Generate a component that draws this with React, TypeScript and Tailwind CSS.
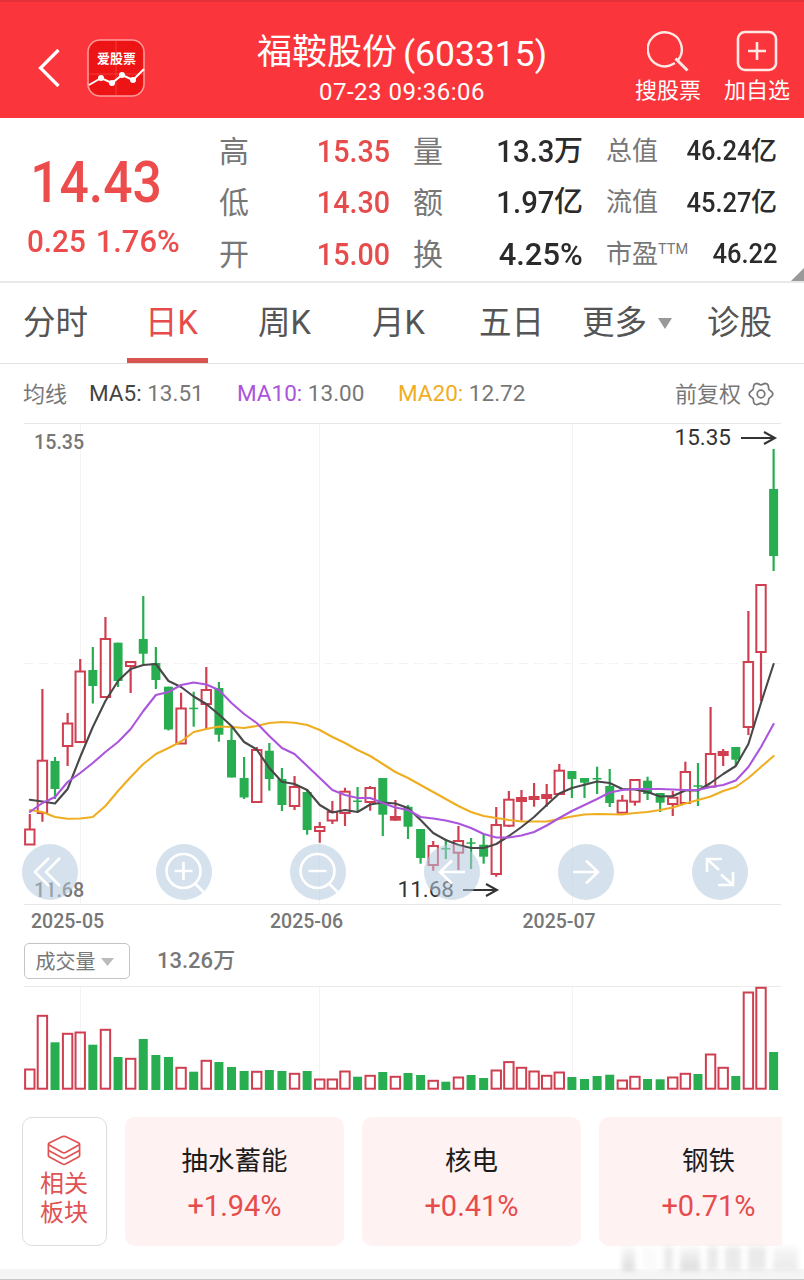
import type { ReactNode } from 'react'

interface Candle {
  up: boolean
  high: number
  top: number
  bottom: number
  low: number
  volume: number
  solid?: boolean
}

const RED = '#cf3f50'
const GREEN = '#28ad50'
const STEP = 12.607
const FIRST_X = 29.8
const CHART_TOP = 422
const VOLUME_TOP = 984
const VOLUME_BASE = 1089.5

// up(1)/down(0)/up with a filled body(2), high, body top, body bottom, low, volume bar top
const raw: number[][] = [
  [1, 814, 829.5, 844.5, 844.5, 1068.7],
  [1, 689, 760.7, 813, 821.7, 1015],
  [0, 757, 761, 789, 799, 1042.3],
  [1, 713, 723.5, 746, 766, 1033],
  [1, 659, 671.5, 742, 742, 1031.7],
  [0, 647, 670, 686, 703.5, 1044.7],
  [1, 617, 639, 697, 697, 1029],
  [0, 642.7, 642.7, 681, 687, 1057],
  [1, 661.7, 662, 666, 693, 1058],
  [0, 596, 639, 653.7, 664, 1039],
  [0, 647, 663, 680, 689, 1055],
  [0, 686.7, 686.7, 729.5, 730.5, 1057],
  [1, 692.7, 708.5, 743.5, 743.5, 1067],
  [0, 691.7, 707.7, 709.2, 726.7, 1071.7],
  [1, 667, 690, 704, 729, 1060],
  [0, 682, 688, 734.7, 741.7, 1062],
  [0, 728, 740, 777.5, 777.5, 1067],
  [0, 757, 778, 797.5, 799, 1071],
  [1, 747, 750, 802, 802, 1071],
  [0, 743, 750.7, 779, 790.7, 1070],
  [0, 768, 779, 805, 811, 1071],
  [1, 776, 787, 806, 810, 1073],
  [0, 789, 792, 830, 834.7, 1071],
  [1, 822, 827, 831, 842.7, 1078.7],
  [1, 801, 812, 820.5, 824, 1078.7],
  [1, 787.7, 791.7, 813, 826, 1070.7],
  [0, 787, 800.5, 802, 811.7, 1076.7],
  [1, 786, 788, 802, 810.7, 1075],
  [0, 778, 778, 814.7, 836, 1072],
  [2, 800, 816, 820.7, 820.7, 1076],
  [0, 805, 806.7, 826.7, 839, 1073],
  [0, 829, 829, 858, 863.7, 1075],
  [1, 841, 846, 865, 870.7, 1080],
  [0, 839, 848, 849.5, 859, 1081.7],
  [1, 826, 841, 852.7, 870, 1076.7],
  [0, 838, 842.3, 843.8, 869, 1075],
  [0, 834, 844.7, 856.7, 863.7, 1078],
  [1, 807, 825, 874, 876.7, 1069.7],
  [1, 791, 799.7, 825.7, 827, 1061.3],
  [2, 790, 797, 802, 820.7, 1067],
  [2, 783, 796, 800, 806.7, 1070.7],
  [2, 784, 794, 799, 806.7, 1075],
  [1, 764, 770.7, 794, 794, 1071.7],
  [0, 771, 771, 779, 798, 1077],
  [0, 778, 778, 782.7, 798, 1079],
  [0, 766.7, 778, 779.5, 794, 1076],
  [0, 769, 786, 803, 807, 1074.7],
  [1, 795, 800.7, 812.7, 812.7, 1079.7],
  [1, 780, 780, 801.7, 805.7, 1076],
  [0, 776.7, 780.7, 794, 800, 1079],
  [0, 793, 793, 802.7, 812, 1079.3],
  [1, 791, 797.7, 804, 816, 1076.7],
  [1, 761.7, 772, 803, 803, 1073],
  [0, 763, 785.3, 786.8, 806, 1074],
  [1, 707, 754, 786.7, 786.7, 1053.7],
  [2, 749, 751, 756, 766, 1067],
  [0, 747, 747, 759.7, 765, 1076],
  [1, 611, 662, 727, 735, 991.7],
  [1, 585, 585, 652, 701, 987],
  [0, 449, 489, 556, 571, 1052],
]

const candles: Candle[] = raw.map(([kind, high, top, bottom, low, volume]) => ({
  up: kind > 0,
  solid: kind === 2,
  high,
  top,
  bottom,
  low,
  volume,
}))

const ma5 = [
  799.7, 801.5, 803.5, 789, 757, 727, 701, 681, 669, 665, 664, 681, 687, 696.5, 704, 714.5, 726, 742, 749.5, 768,
  781.7, 784, 790, 805, 812.5, 810, 812, 804.5, 802.5, 803.5, 808, 820, 833, 840, 845, 848, 848, 844, 836, 827,
  817, 805, 793.5, 788, 784.7, 781.5, 783, 789, 789.5, 792, 796.5, 796, 790.5, 790.5, 783, 774, 766, 744, 703, 664,
]
const ma10 = [
  812, 803, 797, 782, 773, 763, 752, 742, 729, 711, 695, 692, 685, 682.5, 684.5, 690, 703, 714, 723, 736,
  748, 754, 766, 778, 790, 795, 798, 798, 803, 807.5, 810, 817, 818.5, 820.5, 823.5, 828, 834, 837.5, 837.5, 835.5,
  832, 825.5, 818, 811, 805, 799, 792.5, 790, 789, 789, 789, 789.5, 790, 790, 787, 785, 780.5, 767, 747, 724,
]
const ma20 = [
  810, 812, 817, 818.7, 818.5, 817, 806, 791, 777, 764, 754, 748, 741.5, 732, 729, 726.5, 727, 728, 726, 723,
  722, 722.7, 725, 730, 737, 743, 750, 756, 764, 772, 778, 785, 792, 799, 806, 812, 816, 818, 820, 821.5,
  821.5, 821.5, 819, 816.5, 814.5, 814, 814.2, 814.5, 813, 812, 810, 807.5, 803.5, 800, 796.5, 791, 787, 778, 767, 756,
]

const xAt = (i: number) => FIRST_X + i * STEP
const toPoints = (values: number[]) => values.map((y, i) => `${xAt(i).toFixed(1)},${y}`).join(' ')

const stats = [
  { label: '高', value: '15.35', label2: '量', value2: '13.3', unit2: '万', label3: '总值', value3: '46.24', unit3: '亿' },
  { label: '低', value: '14.30', label2: '额', value2: '1.97', unit2: '亿', label3: '流值', value3: '45.27', unit3: '亿' },
  { label: '开', value: '15.00', label2: '换', value2: '4.25%', unit2: '', label3: '市盈', value3: '46.22', unit3: '' },
]

const sectors = [
  { name: '抽水蓄能', change: '+1.94%' },
  { name: '核电', change: '+0.41%' },
  { name: '钢铁', change: '+0.71%' },
]

function Header() {
  return (
    <header className="flex h-[118px] border-t-2 border-[#e23238] bg-[#fa363c] text-white">
      <div className="flex w-[200px] items-start pt-[37px] pl-[38px]">
        <svg className="mt-[9px] h-10 w-[22px]" viewBox="0 0 22 40" fill="none" stroke="#fff" strokeWidth="3.2">
          <path d="M20.5 2 2.5 20l18 18" />
        </svg>
        <svg className="ml-[27px] h-[58px] w-[58px]" viewBox="0 0 58 58">
          <rect x="1" y="1" width="56" height="56" rx="12" fill="#ec1414" stroke="#ff9a9a" strokeWidth="1.6" />
          <path d="M29 2v54M2 35h54" stroke="#f43c3c" strokeWidth="1" />
          <text
            x="29.5"
            y="24"
            textAnchor="middle"
            fontSize="13"
            fontWeight="700"
            fill="#fff"
            fontFamily="'Noto Sans CJK SC', sans-serif"
          >
            爱股票
          </text>
          <path d="m2 46 12-7 11 5 10-8 11 5 11-11" fill="none" stroke="#fff" strokeWidth="2" />
          <circle cx="14" cy="39" r="3" fill="#fff" />
          <circle cx="25" cy="44" r="3" fill="#fff" />
          <circle cx="35" cy="36" r="3" fill="#fff" />
          <circle cx="46" cy="41" r="3" fill="#fff" />
        </svg>
      </div>
      <div className="flex flex-1 flex-col items-center pt-[30px]">
        <div className="flex items-center gap-[6px] leading-10 whitespace-nowrap">
          <span className="text-[35px]">福鞍股份</span>
          <span className="pt-[2px] text-[35.5px]">(603315)</span>
        </div>
        <div className="mt-[4px] text-[24px] leading-7 tracking-[0.5px]">07-23 09:36:06</div>
      </div>
      <div className="flex w-[200px] pt-[28px] pl-[30px] text-[22px]">
        <div className="flex w-[68px] flex-col items-center">
          <svg className="h-[42px] w-[42px]" viewBox="0 0 42 42" fill="none" stroke="#ffe9e4" strokeWidth="2.4">
            <path d="M27 33.6A17 17 0 1 1 31 30" strokeLinecap="round" />
            <path d="m28.5 28.5 12 12" strokeWidth="3" />
          </svg>
          <span className="mt-[5px] leading-7 whitespace-nowrap">搜股票</span>
        </div>
        <div className="ml-[21px] flex w-[68px] flex-col items-center">
          <svg className="h-[42px] w-[42px]" viewBox="0 0 42 42" fill="none" stroke="#ffe9e4" strokeWidth="2.6">
            <rect x="2" y="2" width="38" height="38" rx="7" />
            <path d="M21 12v18M12 21h18" />
          </svg>
          <span className="mt-[5px] leading-7 whitespace-nowrap">加自选</span>
        </div>
      </div>
    </header>
  )
}

function Quote() {
  return (
    <section className="relative flex h-[165px] border-b-2 border-[#e9e9e9]">
      <div className="flex w-[207px] flex-col items-center pt-[34px] font-medium text-[#ec4c4c]">
        <div className="mr-4 origin-center scale-x-[0.89] text-[58px] leading-[60px]">14.43</div>
        <div className="mt-[12px] flex w-[153px] justify-between text-[31.5px] leading-9">
          <span className="origin-left scale-x-[0.94]">0.25</span>
          <span className="origin-right scale-x-[0.98]">1.76%</span>
        </div>
      </div>
      <div className="pt-[7.5px]">
        {stats.map((row) => (
          <div key={row.label} className="flex h-[51.5px] items-center whitespace-nowrap text-[#777]">
            <span className="ml-3 w-[31px] text-[30px]">{row.label}</span>
            <span className="w-[140px] origin-right scale-x-[0.91] text-right text-[31.5px] font-medium text-[#e64c4c]">
              {row.value}
            </span>
            <span className="ml-[23px] w-[31px] text-[30px]">{row.label2}</span>
            <span className="flex w-[139px] items-center justify-end font-medium text-[#2b2b2b]">
              {row.unit2 ? (
                <>
                  <span className="origin-right scale-x-[0.93] text-[31.5px]">{row.value2}</span>
                  <span className="text-[29px]">{row.unit2}</span>
                </>
              ) : (
                <span className="origin-right scale-x-[0.98] text-[31.5px]">{row.value2}</span>
              )}
            </span>
            <span className="ml-[23px] w-[82px] text-[26px]">
              {row.label3}
              {row.label === '开' && <span className="relative -top-[9px] text-[14.5px]">TTM</span>}
            </span>
            <span className="flex w-[89px] items-center justify-end font-medium text-[#2b2b2b]">
              <span className="origin-right scale-x-[0.91] text-[28px]">{row.value3}</span>
              {row.unit3 && <span className="text-[26px]">{row.unit3}</span>}
            </span>
          </div>
        ))}
      </div>
      <svg className="absolute right-0 bottom-0 h-[13px] w-[13px]" viewBox="0 0 13 13">
        <path d="M13 0v13H0z" fill="#999" />
      </svg>
    </section>
  )
}

function Tabs() {
  return (
    <nav className="flex h-[81px] items-center border-b border-[#e2e2e2] pl-[23px] text-[32.5px] leading-[48px] whitespace-nowrap text-[#555]">
      <span className="w-[104px]">分时</span>
      <span className="relative flex h-[80px] w-[81px] items-center justify-center pl-2 text-[#e64c4c]">
        日K
        <span className="absolute bottom-0 left-0 h-[5px] w-[81px] bg-[#d9534f]" />
      </span>
      <span className="ml-[50px] w-[114px]">周K</span>
      <span className="w-[107px]">月K</span>
      <span className="w-[103px]">五日</span>
      <span className="flex w-[125px] items-center">
        更多
        <svg className="ml-[11px] h-[11px] w-[14px]" viewBox="0 0 14 11">
          <path d="M0 0h14L7 11z" fill="#999" />
        </svg>
      </span>
      <span>诊股</span>
    </nav>
  )
}

function gearPath() {
  const points: string[] = []
  for (let deg = 0; deg < 360; deg += 6) {
    const a = (deg * Math.PI) / 180
    const r = 10.5 + 1.3 * Math.cos(6 * a)
    points.push(`${(13 + r * Math.cos(a)).toFixed(2)} ${(13 + r * Math.sin(a)).toFixed(2)}`)
  }
  return `M${points.join('L')}Z`
}

function Averages() {
  return (
    <div className="flex h-[58px] items-center pt-[2px] pl-[23px] text-[22.5px] whitespace-nowrap text-[#777]">
      <span className="w-[66px] text-[22px]">均线</span>
      <span className="w-[148px]">
        <span className="text-[#444]">MA5:</span> 13.51
      </span>
      <span className="w-[161px]">
        <span className="text-[#ab55dc]">MA10:</span> 13.00
      </span>
      <span className="w-[277px]">
        <span className="text-[#efae22]">MA20:</span> 12.72
      </span>
      <span className="text-[22px]">前复权</span>
      <svg className="ml-[7px] h-[26px] w-[26px]" viewBox="0 0 26 26" fill="none" stroke="#777" strokeWidth="1.7">
        <path d={gearPath()} strokeLinejoin="round" />
        <circle cx="13" cy="13" r="3.8" />
      </svg>
    </div>
  )
}

function ControlButton({ children }: { children: ReactNode }) {
  return (
    <button className="h-14 w-14 rounded-full bg-[rgb(179,200,220)]/55">
      <svg className="h-14 w-14" viewBox="0 0 56 56" fill="none" stroke="#fff" strokeWidth="2.6">
        {children}
      </svg>
    </button>
  )
}

function PriceChart() {
  return (
    <div className="relative h-[484px]">
      <svg className="block h-[484px] w-[804px]" viewBox={`0 ${CHART_TOP} 804 484`}>
        <g stroke="#f3f3f3" strokeWidth="1">
          <path d="M80.5 423v482M319.5 423v482M572.5 423v482" />
          <path d="M24 663.5h757" strokeDasharray="9 6" />
          <path d="M24 423.5h757M24 904.5h757" stroke="#e6e6e6" />
        </g>
        <g fontFamily="Roboto, sans-serif">
          <text x="34" y="449" fontSize="19.7" fontWeight="500" fill="#777">15.35</text>
          <text x="34" y="897" fontSize="19.7" fontWeight="500" fill="#777">11.68</text>
          <text x="674.5" y="445" fontSize="22.5" fill="#333">15.35</text>
          <text x="397.5" y="897" fontSize="22.5" fill="#333">11.68</text>
        </g>
        {candles.map((c, i) => {
          const x = xAt(i)
          if (!c.up || c.solid) {
            const color = c.up ? RED : GREEN
            return (
              <g key={i} fill={color}>
                <rect x={x - 1.1} y={c.high} width="2.2" height={c.low - c.high} />
                <rect x={c.up ? x - 5.5 : x - 4.5} y={c.top} width={c.up ? 11 : 9} height={c.bottom - c.top} />
              </g>
            )
          }
          return (
            <g key={i} stroke={RED} strokeWidth="2.2" fill="none">
              <path d={`M${x} ${c.high}V${c.top}M${x} ${c.bottom}V${c.low}`} />
              <rect x={x - 4.7} y={c.top} width="9.4" height={c.bottom - c.top} strokeWidth="2" />
            </g>
          )
        })}
        <g fill="none" strokeWidth="2.1" strokeLinejoin="round" strokeLinecap="round">
          <polyline points={toPoints(ma20)} stroke="#efae22" />
          <polyline points={toPoints(ma5)} stroke="#484848" />
          <polyline points={toPoints(ma10)} stroke="#ab55dc" />
        </g>
        <g fill="none" stroke="#333" strokeWidth="2">
          <path d="M741 438h34M764 432l11 6-11 6" />
          <path d="M463 890h34M486 884l11 6-11 6" />
        </g>
      </svg>
      <div className="absolute bottom-[6.5px] left-[22px] flex gap-[78px]">
        <ControlButton>
          <path d="M27 14 13 28l14 14M38 14 24 28l14 14" />
        </ControlButton>
        <ControlButton>
          <circle cx="27.5" cy="27" r="17" />
          <path d="M18.5 27h18M27.5 18v18M39 39.5l8.5 8.5" />
        </ControlButton>
        <ControlButton>
          <circle cx="27.5" cy="27" r="17" />
          <path d="M18.5 27h18M39 39.5l8.5 8.5" />
        </ControlButton>
        <ControlButton>
          <path d="M41 28H15.5M28 16.5 16 28l12 11.5" />
        </ControlButton>
        <ControlButton>
          <path d="M15 28h25.5M28 16.5 40 28 28 39.5" />
        </ControlButton>
        <ControlButton>
          <path d="M15 28V15h15M15 15l12 11M41 28v13H26M41 41 29 30.5" />
        </ControlButton>
      </div>
    </div>
  )
}

function VolumeChart() {
  return (
    <svg className="block h-[108px] w-[804px]" viewBox={`0 ${VOLUME_TOP} 804 108`}>
      <path d="M24 986.5h757" stroke="#ebebeb" />
      <path d="M80.5 987v103M319.5 987v103M572.5 987v103" stroke="#f3f3f3" />
      {candles.map((c, i) => {
        const x = xAt(i)
        return c.up ? (
          <rect
            key={i}
            x={x - 4.7}
            y={c.volume + 0.8}
            width="9.4"
            height={VOLUME_BASE - c.volume - 1.6}
            fill="none"
            stroke={RED}
            strokeWidth="2"
          />
        ) : (
          <rect key={i} x={x - 4.5} y={c.volume} width="9" height={VOLUME_BASE + 0.5 - c.volume} fill={GREEN} />
        )
      })}
    </svg>
  )
}

function Sectors() {
  return (
    <div className="mt-[25px] mr-[22px] ml-[22px] flex h-[129px] gap-[18px] overflow-hidden">
      <div className="flex w-[85px] shrink-0 flex-col items-center rounded-[10px] border-[1.5px] border-[#dedede] pt-[17px] pr-px text-[24px] leading-[29px] text-[#e05353]">
        <svg className="mb-[4px] h-[31px] w-[34px]" viewBox="0 0 34 31" fill="none" stroke="#e05353" strokeWidth="1.7" strokeLinejoin="round">
          <path d="M15.5 1.6 2.2 8q-1.4 1 0 2l13.300 7.500q1.500.7 3 0L31.800 10q1.400-1 0-2L18.500 1.600q-1.500-.6-3 0Z" />
          <path d="M1.400 9.500v5q0 .8.700 1.200l13.400 7.300q1.500.7 3 0l13.400-7.300q.7-.4.700-1.200v-5" />
          <path d="M1.400 15.500v5q0 .8.700 1.200L15.500 29q1.500.7 3 0l13.400-7.300q.7-.4.700-1.200v-5" />
        </svg>
        <span>相关</span>
        <span>板块</span>
      </div>
      {sectors.map((sector) => (
        <div
          key={sector.name}
          className="flex w-[219px] shrink-0 flex-col items-center rounded-[10px] bg-[#fff2f2] pt-[24px]"
        >
          <span className="text-[26.5px] leading-10 text-[#1d1d1d]">{sector.name}</span>
          <span className="mt-[6.5px] text-[29px] leading-9 text-[#e64c4c]">{sector.change}</span>
        </div>
      ))}
    </div>
  )
}

export default function App() {
  return (
    <div className="relative h-[1280px] w-[804px] overflow-hidden bg-white font-['Roboto','Noto_Sans_CJK_SC',sans-serif]">
      <Header />
      <Quote />
      <Tabs />
      <Averages />
      <PriceChart />
      <div className="flex h-8 items-center text-[19.5px] font-medium text-[#777]">
        <span className="ml-[31px] w-[239px]">2025-05</span>
        <span className="w-[252.5px]">2025-06</span>
        <span>2025-07</span>
      </div>
      <div className="flex h-[46px] items-start pt-[5px] pl-6 text-[#777]">
        <div className="flex h-9 w-[106px] items-center rounded-[5px] border-[1.5px] border-[#c4c4c4] pt-px pl-[10.5px] text-[20px]">
          成交量
          <svg className="ml-[5px] h-[8px] w-[13px]" viewBox="0 0 13 8">
            <path d="M0 0h13L6.5 8z" fill="#bbb" />
          </svg>
        </div>
        <span className="ml-[27px] text-[22px] leading-[35px] font-medium">13.26万</span>
      </div>
      <VolumeChart />
      <Sectors />
      <footer className="absolute inset-x-0 bottom-0 h-[11px] border-b border-[#c8c8c8] bg-[#f5f5f5]" />
      <div className="absolute top-[1247px] left-[622px] flex h-[24px] w-[176px] items-stretch gap-[7px] opacity-80 blur-[2.5px]">
        <span className="w-[13px] bg-gradient-to-b from-neutral-100 to-neutral-300" />
        <span className="w-[16px] bg-neutral-50" />
        <span className="w-[9px] bg-neutral-200" />
        <span className="w-[20px] bg-gradient-to-b from-neutral-100 to-neutral-300" />
        <span className="w-[12px] bg-neutral-200" />
        <span className="w-[16px] bg-neutral-200" />
        <span className="w-[18px] bg-neutral-200" />
        <span className="w-[26px] bg-gradient-to-b from-neutral-100 to-neutral-200" />
      </div>
    </div>
  )
}
